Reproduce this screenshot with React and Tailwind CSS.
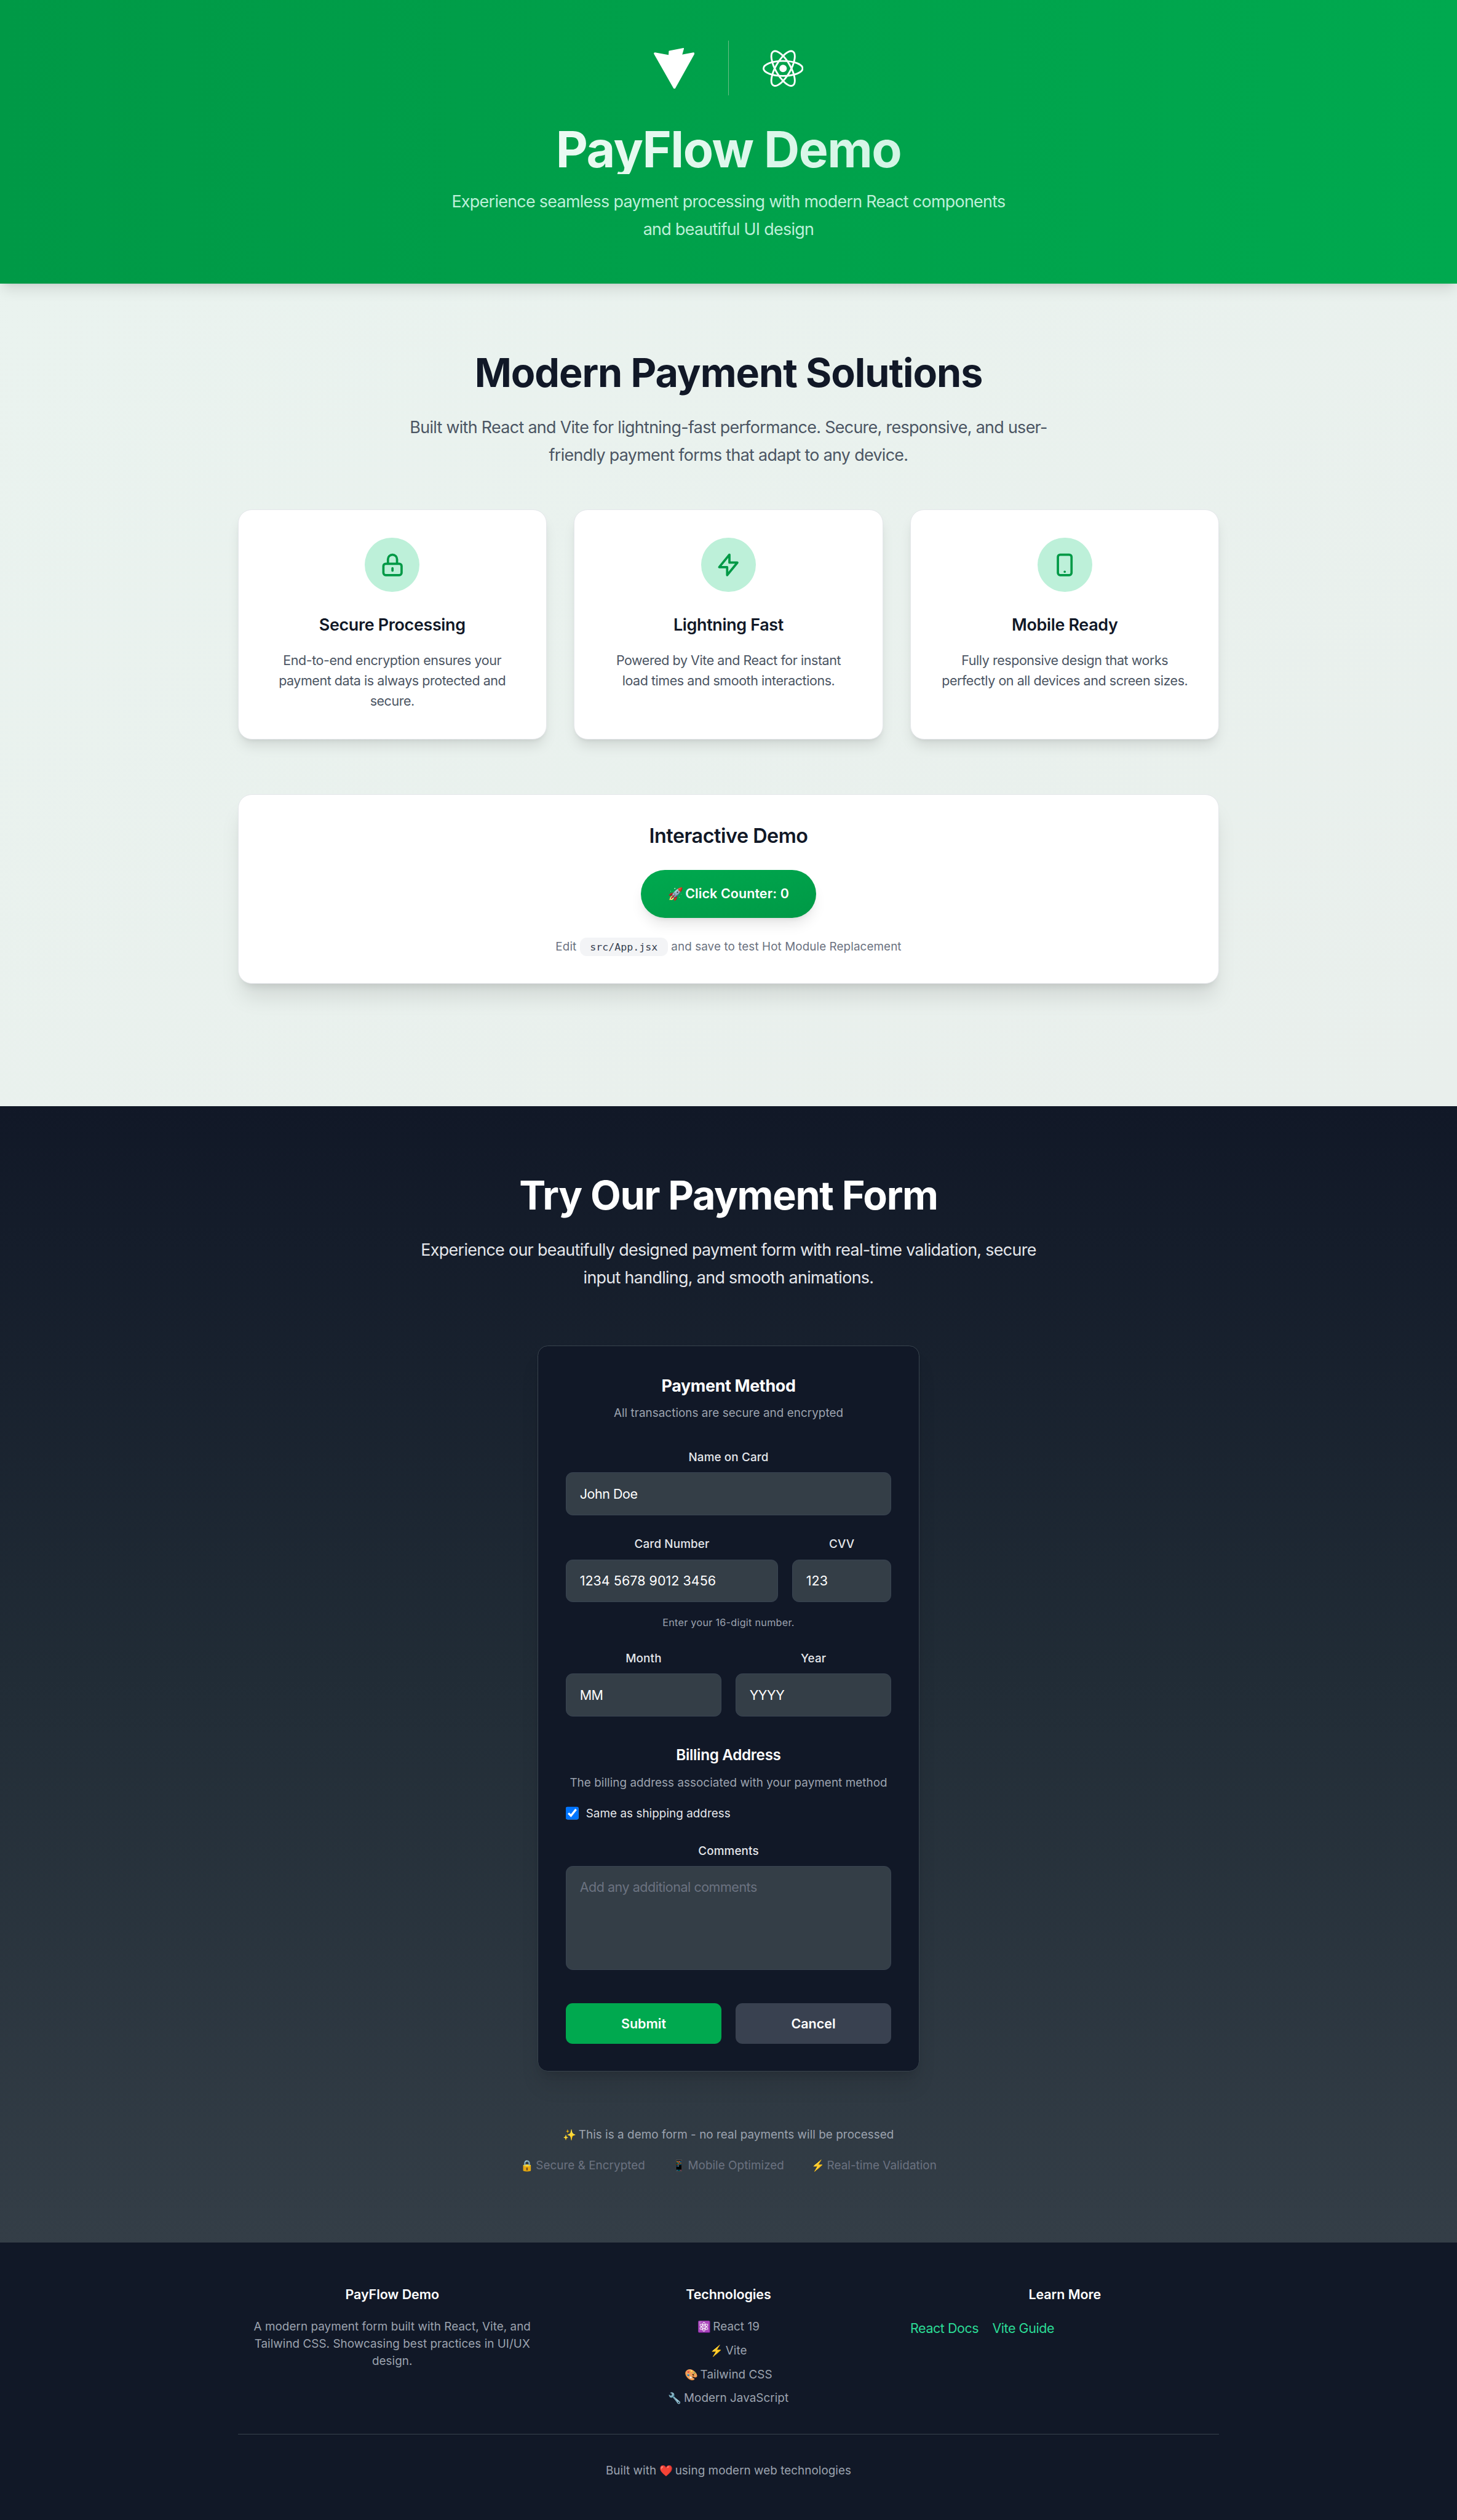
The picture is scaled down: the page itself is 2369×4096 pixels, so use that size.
import React, { useState } from "react";

const BODY = "text-[15.5px] leading-6 tracking-[-0.0204em]";
const SMALL = "text-[13.6px] leading-5 tracking-[0.003em]";
const LABEL =
  "mb-2 block text-center text-[13.6px] font-medium leading-5 tracking-[0.007em] text-[#e5e7eb]";
const FIELD =
  "block h-[50px] w-full min-w-0 rounded-lg border border-[#394452] bg-[#343e47] px-4 text-[15.5px] text-white outline-none";

const features = [
  {
    title: "Secure Processing",
    text: "End-to-end encryption ensures your payment data is always protected and secure.",
    path: "M12 15v2m-6 4h12a2 2 0 002-2v-6a2 2 0 00-2-2H6a2 2 0 00-2 2v6a2 2 0 002 2zm10-10V7a4 4 0 00-8 0v4h8z",
  },
  {
    title: "Lightning Fast",
    text: "Powered by Vite and React for instant load times and smooth interactions.",
    path: "M13 10V3L4 14h7v7l9-11h-7z",
  },
  {
    title: "Mobile Ready",
    text: "Fully responsive design that works perfectly on all devices and screen sizes.",
    path: "M12 18h.01M8 21h8a2 2 0 002-2V5a2 2 0 00-2-2H8a2 2 0 00-2 2v14a2 2 0 002 2z",
  },
];

function Emoji({ children }) {
  return <span className="mr-[0.06em] text-[0.93em] leading-none tracking-[-0.17em]">{children}</span>;
}

function ViteLogo() {
  return (
    <svg className="h-12 w-12" viewBox="0 0 256 257" fill="white">
      <path d="M255.153 37.938L134.897 252.976c-2.483 4.44-8.862 4.466-11.382.048L.875 37.958c-2.746-4.814 1.371-10.646 6.827-9.67l120.385 21.517a6.537 6.537 0 0 0 2.322-.004l117.867-21.483c5.438-.991 9.574 4.796 6.877 9.62Z" />
      <path d="M185.432.063L96.44 17.501a3.268 3.268 0 0 0-2.634 3.014l-5.474 92.456a3.268 3.268 0 0 0 3.997 3.378l24.777-5.718c2.318-.535 4.413 1.507 3.936 3.838l-7.361 36.047c-.495 2.426 1.782 4.5 4.151 3.78l15.304-4.649c2.372-.72 4.652 1.36 4.15 3.788l-11.698 56.621c-.732 3.542 3.979 5.473 5.943 2.437l1.313-2.028l72.516-144.72c1.215-2.423-.88-5.186-3.54-4.672l-25.505 4.922c-2.396.462-4.435-1.77-3.759-4.114l16.646-57.705c.677-2.35-1.37-4.583-3.769-4.113Z" />
    </svg>
  );
}

function ReactLogo() {
  return (
    <svg className="h-12 w-12" viewBox="-11.5 -11.5 23 23" fill="none" stroke="white">
      <circle r="2.07" fill="white" stroke="none" />
      <ellipse rx="11" ry="4.2" />
      <ellipse rx="11" ry="4.2" transform="rotate(60)" />
      <ellipse rx="11" ry="4.2" transform="rotate(120)" />
    </svg>
  );
}

function Header() {
  return (
    <header className="relative z-10 bg-linear-to-r from-[#009946] to-[#00a94f] py-12 shadow-lg">
      <div className="mx-auto flex w-[1152px] flex-col items-center text-center">
        <div className="mb-8 flex items-center gap-[39.5px]">
          <ViteLogo />
          <div className="h-16 w-px bg-[#6cbe86]" />
          <ReactLogo />
        </div>
        <h1 className="mb-4 h-[60px] w-full bg-linear-to-r from-white to-[#bdf0d9] bg-clip-text pt-[1.3px] text-[58.2px] font-bold leading-[60px] tracking-[-0.019em] text-transparent">
          PayFlow Demo
        </h1>
        <p className="w-[672px] text-[19.4px] leading-[32.5px] tracking-[-0.0256em] text-[#bdf0d9]">
          Experience seamless payment processing with modern React components
          <br />
          and beautiful UI design
        </p>
      </div>
    </header>
  );
}

function Features() {
  return (
    <div className="mb-16 grid grid-cols-3 gap-8">
      {features.map((f) => (
        <div
          key={f.title}
          className="flex h-[270px] flex-col items-center rounded-2xl border border-gray-200 bg-white p-8 text-center shadow-lg"
        >
          <div className="mb-6 flex h-16 w-16 shrink-0 items-center justify-center rounded-full bg-[#bdf0d9]">
            <svg
              className="h-8 w-8"
              viewBox="0 0 24 24"
              fill="none"
              stroke="#009946"
              strokeWidth="2"
              strokeLinecap="round"
              strokeLinejoin="round"
            >
              <path d={f.path} />
            </svg>
          </div>
          <h3 className="mb-4 text-[19.4px] font-semibold leading-7 tracking-[-0.0116em] text-[#111827]">
            {f.title}
          </h3>
          <p className={`${BODY} text-[#4b5563]`}>{f.text}</p>
        </div>
      ))}
    </div>
  );
}

function InteractiveDemo() {
  const [count, setCount] = useState(0);
  return (
    <div className="mb-16 flex h-[222px] flex-col items-center rounded-2xl border border-gray-200 bg-white p-8 text-center shadow-xl">
      <h3 className="mb-6 h-8 pt-[0.7px] text-[23.3px] font-semibold leading-8 tracking-[-0.0137em] text-[#111827]">
        Interactive Demo
      </h3>
      <button
        onClick={() => setCount(count + 1)}
        className="mb-6 h-14 shrink-0 rounded-full bg-linear-to-br from-[#00a94f] to-[#009946] px-8 text-[15.5px] font-semibold leading-6 tracking-[0.004em] text-white shadow-lg"
      >
        <Emoji>🚀</Emoji> Click Counter: {count}
      </button>
      <p className="text-[13.6px] leading-5 tracking-[0.005em] text-[#6b7280]">
        Edit{" "}
        <code className="rounded-lg bg-[#f3f4f6] px-3 py-1 font-['DejaVu_Sans_Mono',monospace] text-[12px] tracking-normal text-[#374151]">
          src/App.jsx
        </code>{" "}
        and save to test Hot Module Replacement
      </p>
    </div>
  );
}

function PaymentForm() {
  return (
    <form
      onSubmit={(e) => e.preventDefault()}
      className="mx-auto w-[448px] rounded-xl border border-[#38434d] bg-[#111827] p-8 text-center shadow-xl"
    >
      <h3 className="mb-2 text-[19.4px] font-bold leading-7 tracking-[-0.0127em] text-white">
        Payment Method
      </h3>
      <p className={`${SMALL} mb-8 text-[#9ca3af]`}>All transactions are secure and encrypted</p>

      <label className={LABEL}>Name on Card</label>
      <input className={`${FIELD} tracking-[-0.02em]`} defaultValue="John Doe" />

      <div className="mt-6 grid grid-cols-3 gap-4">
        <div className="col-span-2">
          <label className={LABEL}>Card Number</label>
          <input className={`${FIELD} tracking-[0.002em]`} defaultValue="1234 5678 9012 3456" />
        </div>
        <div>
          <label className={LABEL}>CVV</label>
          <input className={`${FIELD} tracking-[0.002em]`} defaultValue="123" />
        </div>
      </div>
      <p className="mt-4 text-[11.64px] leading-4 tracking-[0.019em] text-[#9ca3af]">
        Enter your 16-digit number.
      </p>

      <div className="mt-6 grid grid-cols-2 gap-4">
        <div>
          <label className={LABEL}>Month</label>
          <input className={`${FIELD} tracking-[-0.02em]`} defaultValue="MM" />
        </div>
        <div>
          <label className={LABEL}>Year</label>
          <input className={`${FIELD} tracking-[-0.02em]`} defaultValue="YYYY" />
        </div>
      </div>

      <h4 className="mt-8 text-[17.5px] font-semibold leading-7 tracking-[-0.013em] text-white">
        Billing Address
      </h4>
      <p className={`${SMALL} mt-2 whitespace-nowrap text-[#9ca3af]`}>
        The billing address associated with your payment method
      </p>
      <label className={`${SMALL} mt-4 mb-6 flex items-center gap-2 text-[#e5e7eb]`}>
        <input type="checkbox" defaultChecked className="h-4 w-4" />
        Same as shipping address
      </label>

      <label className={LABEL}>Comments</label>
      <textarea
        className="block h-[122px] w-full resize-none rounded-lg border border-[#394452] bg-[#343e47] px-4 py-3 text-[15.5px] leading-6 tracking-[-0.021em] text-white outline-none placeholder:text-[#6b7280]"
        placeholder="Add any additional comments"
      />

      <div className="mt-[38.5px] grid grid-cols-2 gap-4 text-[15.5px] font-semibold text-white">
        <button className="h-12 rounded-lg bg-[#00a94f]">Submit</button>
        <button className="h-12 rounded-lg bg-[#394150]">Cancel</button>
      </div>
    </form>
  );
}

function FormSection() {
  return (
    <section className="bg-linear-to-b from-[#111827] via-[#212c36] to-[#343e47] pt-20 pb-[80.6px] text-center">
      <h2 className="mb-6 h-12 pt-px text-[46.6px] font-bold leading-[48px] tracking-[-0.02em] text-white">
        Try Our Payment Form
      </h2>
      <p className="mb-16 text-[19.4px] leading-[32.5px] tracking-[-0.0249em] text-[#e5e7eb]">
        Experience our beautifully designed payment form with real-time validation, secure
        <br />
        input handling, and smooth animations.
      </p>
      <PaymentForm />
      <p className={`${SMALL} mt-16 mb-4 h-5 text-[#9ca3af]`}>
        <Emoji>✨</Emoji> This is a demo form - no real payments will be processed
      </p>
      <div className={`${SMALL} flex h-5 justify-center gap-8 text-[#6b7280]`}>
        <span>
          <Emoji>🔒</Emoji> Secure &amp; Encrypted
        </span>
        <span>
          <Emoji>📱</Emoji> Mobile Optimized
        </span>
        <span>
          <Emoji>⚡</Emoji> Real-time Validation
        </span>
      </div>
    </section>
  );
}

function FooterHeading({ children }) {
  return (
    <h4 className="mb-4 text-[15.5px] font-semibold leading-6 tracking-[-0.003em] text-white">{children}</h4>
  );
}

function Footer() {
  return (
    <footer className="bg-[#111827] pt-[48.6px] pb-12">
      <div className="mx-auto w-[1152px] text-center">
        <div className="grid grid-cols-3 gap-8">
          <div>
            <FooterHeading>PayFlow Demo</FooterHeading>
            <p className={`${SMALL} text-[#9ca3af]`}>
              A modern payment form built with React, Vite, and
              <br />
              Tailwind CSS. Showcasing best practices in UI/UX
              <br />
              design.
            </p>
          </div>
          <div>
            <FooterHeading>Technologies</FooterHeading>
            <ul className={`${SMALL} space-y-2 text-[#9ca3af]`}>
              <li className="h-5">
                <Emoji>⚛️</Emoji> React 19
              </li>
              <li className="h-5">
                <Emoji>⚡</Emoji> Vite
              </li>
              <li className="h-5">
                <Emoji>🎨</Emoji> Tailwind CSS
              </li>
              <li className="h-5">
                <Emoji>🔧</Emoji> Modern JavaScript
              </li>
            </ul>
          </div>
          <div>
            <FooterHeading>Learn More</FooterHeading>
            <div className={`${BODY} flex gap-4 text-[#2bdc96]`}>
              <a>React Docs</a>
              <a>Vite Guide</a>
            </div>
          </div>
        </div>
        <div className="mt-8 border-t border-[#38434d] pt-8">
          <p className={`${SMALL} text-[#9ca3af]`}>
            Built with <Emoji>❤️</Emoji> using modern web technologies
          </p>
        </div>
      </div>
    </footer>
  );
}

export default function App() {
  return (
    <div className="h-[4096px] w-[2369px] overflow-hidden bg-[#111827]">
      <div className="w-[1710px] font-['Inter','Noto_Color_Emoji',sans-serif] [zoom:1.38538]">
        <Header />
        <main className="bg-linear-to-br from-[#eaf3ef] to-[#e9efec] py-20">
          <div className="mx-auto w-[1152px]">
            <h2 className="mb-6 h-12 pt-px text-center text-[46.6px] font-bold leading-[48px] tracking-[-0.0159em] text-[#111827]">
              Modern Payment Solutions
            </h2>
            <p className="mb-12 text-center text-[19.4px] leading-[32.5px] tracking-[-0.0249em] text-[#4b5563]">
              Built with React and Vite for lightning-fast performance. Secure, responsive, and user-
              <br />
              friendly payment forms that adapt to any device.
            </p>
            <Features />
            <InteractiveDemo />
          </div>
        </main>
        <FormSection />
        <Footer />
      </div>
    </div>
  );
}
